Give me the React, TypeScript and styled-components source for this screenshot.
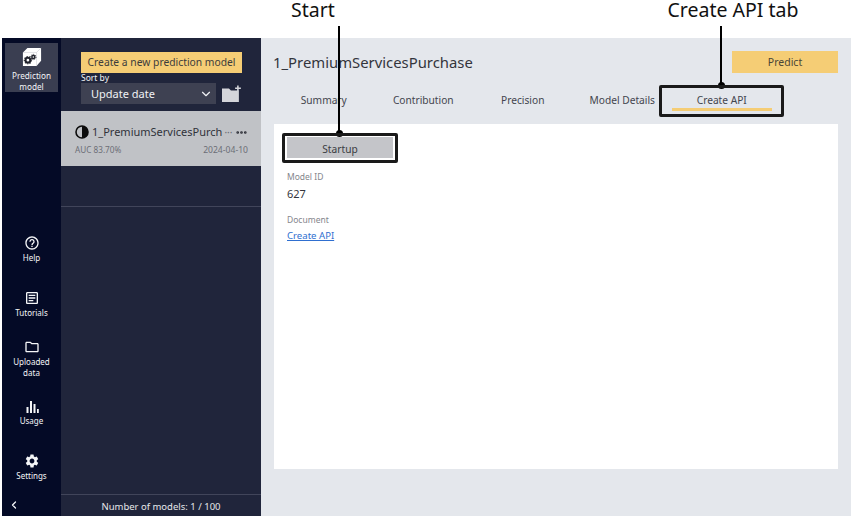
import React from 'react';
import styled, { createGlobalStyle } from 'styled-components';
import { ChevronDown, ChevronLeft, Ellipsis } from 'lucide-react';
import { MdHelpOutline, MdOutlineArticle, MdOutlineFolder, MdSettings } from 'react-icons/md';

const GlobalStyle = createGlobalStyle`
  html, body {
    margin: 0;
    padding: 0;
    background: #ffffff;
    font-family: "Noto Sans", "Open Sans", sans-serif;
  }
  * { box-sizing: border-box; }
`;

const Page = styled.div`
  position: relative;
  width: 853px;
  height: 518px;
  padding: 38px 2px 2px;
  background: #ffffff;
  overflow: hidden;
`;

const Frame = styled.div`
  display: flex;
  height: 478px;
`;

/* --- left nav --- */
const Nav = styled.nav`
  width: 59px;
  flex-shrink: 0;
  background: #040a26;
  display: flex;
  flex-direction: column;
  align-items: center;
  padding-top: 5px;
`;

const ActiveNavItem = styled.div`
  width: 53px;
  height: 49px;
  background: #3a3e51;
  display: flex;
  flex-direction: column;
  align-items: center;
  color: #f4f5f7;
  font-size: 8.2px;
  line-height: 11px;
  text-align: center;
  padding-top: 4px;
  gap: 3px;
`;

const NavGroup = styled.div`
  margin-top: auto;
  width: 100%;
  display: flex;
  flex-direction: column;
`;

const NavItem = styled.div`
  height: 54.5px;
  display: flex;
  flex-direction: column;
  align-items: center;
  justify-content: center;
  color: #f4f5f7;
  font-size: 8px;
  line-height: 11px;
  text-align: center;
  gap: 1px;

  span {
    max-width: 42px;
  }
`;

const Collapse = styled.div`
  height: 23px;
  margin-top: -1.5px;
  width: 100%;
  display: flex;
  align-items: center;
  padding-left: 6px;
  color: #f4f5f7;
`;

/* --- model list --- */
const ListPanel = styled.aside`
  width: 200px;
  flex-shrink: 0;
  background: #20253b;
  display: flex;
  flex-direction: column;
`;

const ListTools = styled.div`
  padding: 14px 19px 7px 20px;
`;

const NewModelButton = styled.div`
  width: 161px;
  height: 21px;
  background: #f5cd75;
  color: #3c3c3c;
  font-size: 10.3px;
  line-height: 21px;
  text-align: center;
  white-space: nowrap;
`;

const SortLabel = styled.div`
  color: #f0f1f4;
  font-size: 8.5px;
  line-height: 10px;
`;

const SortRow = styled.div`
  display: flex;
  align-items: center;
  gap: 6px;
`;

const SortSelect = styled.div`
  width: 136px;
  height: 21px;
  background: #3e4152;
  color: #f0f1f4;
  font-size: 11px;
  display: flex;
  align-items: center;
  justify-content: space-between;
  padding: 0 3px 0 10px;
`;

const ModelRow = styled.div`
  height: 55px;
  background: #c0c2c6;
  padding: 11px 13px 0 14px;
`;

const ModelName = styled.div`
  display: flex;
  align-items: center;
  color: #30323a;
  font-size: 11px;
  line-height: 20px;
  white-space: nowrap;
`;

const NameText = styled.span`
  margin-left: 3px;
`;

const MoreHint = styled.span`
  color: #6a6c74;
  font-size: 10px;
  margin-left: 2px;
  margin-right: auto;
`;

const ModelMeta = styled.div`
  display: flex;
  justify-content: space-between;
  color: #6c6e76;
  font-size: 8.2px;
  line-height: 12px;
  margin-top: 2px;
`;

const ModelDate = styled.span`
  font-size: 8.6px;
`;

const EmptySlot = styled.div`
  height: 41px;
  border-bottom: 1px solid #41455a;
`;

const ListFooter = styled.div`
  margin-top: auto;
  height: 22px;
  border-top: 1px solid #41455a;
  color: #e6e7ea;
  font-size: 9.5px;
  line-height: 23px;
  text-align: center;
`;

/* --- main area --- */
const Main = styled.main`
  flex: 1;
  background: #e4e7ec;
  padding: 13px 13px 47px 13px;
  display: flex;
  flex-direction: column;
`;

const Header = styled.div`
  display: flex;
  align-items: center;
  justify-content: space-between;
  height: 22px;
  margin-left: -1px;
`;

const Title = styled.h1`
  margin: 0;
  font-size: 14.85px;
  font-weight: 400;
  color: #33353c;
`;

const PredictButton = styled.div`
  width: 106px;
  height: 22px;
  background: #f5cd75;
  color: #4a4636;
  font-size: 10.5px;
  line-height: 22px;
  text-align: center;
`;

const Tabs = styled.div`
  display: flex;
  height: 37px;
  margin-top: 14px;
`;

const Tab = styled.div<{ $active?: boolean }>`
  width: 99.5px;
  height: 20px;
  margin-top: 4px;
  color: #43454e;
  font-size: 10.2px;
  line-height: 18px;
  text-align: center;
  white-space: nowrap;
  border-bottom: ${p => (p.$active ? '3px solid #f5cd75' : '3px solid transparent')};
`;

const Content = styled.section`
  flex: 1;
  background: #ffffff;
  padding: 13px;
`;

const StartupButton = styled.div`
  width: 106px;
  height: 21px;
  background: #c4c5c9;
  color: #3a3c42;
  font-size: 10.2px;
  line-height: 24px;
  text-align: center;
`;

const FieldLabel = styled.div<{ $gap: number }>`
  color: #85868c;
  font-size: 8.5px;
  line-height: 12px;
  margin-top: ${p => p.$gap}px;
`;

const FieldValue = styled.div`
  color: #33353c;
  font-size: 11px;
  line-height: 16px;
  margin-top: 3px;
`;

const DocLink = styled.a`
  display: block;
  color: #2f6fd0;
  font-size: 9.6px;
  line-height: 14px;
  margin-top: 3px;
  text-decoration: underline;
`;

/* --- annotations on top of the screenshot --- */
const CalloutLabel = styled.div<{ $x: number }>`
  position: absolute;
  top: -1px;
  left: ${p => p.$x}px;
  transform: translateX(-50%);
  color: #111111;
  font-size: 19.5px;
  line-height: 21px;
  white-space: nowrap;
`;

const CalloutLine = styled.div<{ $x: number; $h: number }>`
  position: absolute;
  top: 26px;
  left: ${p => p.$x}px;
  width: 2px;
  height: ${p => p.$h}px;
  background: #000000;

  &::after {
    content: '';
    position: absolute;
    left: -2.5px;
    bottom: -3.5px;
    width: 7px;
    height: 7px;
    border-radius: 50%;
    background: #000000;
  }
`;

const CalloutBox = styled.div<{ $x: number; $y: number; $w: number; $h: number }>`
  position: absolute;
  left: ${p => p.$x}px;
  top: ${p => p.$y}px;
  width: ${p => p.$w}px;
  height: ${p => p.$h}px;
  border: 3px solid #1a1a1a;
  border-radius: 2px;
`;

const PredictionIcon = () => (
  <svg width="20" height="20" viewBox="0 0 22 22">
    <path d="M1 6 L6 1 H21 V15 L16 21 H1 Z" fill="#ffffff" />
    <path d="M1 6 H16 V21 M16 6 L21 1" fill="none" stroke="#c9cad0" strokeWidth="0.6" />
    <circle cx="6.5" cy="14.5" r="2.6" fill="none" stroke="#20222c" strokeWidth="2.2" />
    <circle cx="6.5" cy="14.5" r="4" fill="none" stroke="#20222c" strokeWidth="1.2" strokeDasharray="1.4 1.4" />
    <circle cx="12.5" cy="11" r="1.7" fill="none" stroke="#20222c" strokeWidth="1.6" />
    <circle cx="12.5" cy="11" r="2.9" fill="none" stroke="#20222c" strokeWidth="1" strokeDasharray="1.1 1.1" />
  </svg>
);

const FolderPlusIcon = () => (
  <svg width="20" height="17" viewBox="0 0 20 17">
    <path d="M0 3.5 H7 L9 5.5 H17 V17 H0 Z" fill="#d4d5da" />
    <path d="M16 0.5 V6 M13.2 3.2 H19" stroke="#d4d5da" strokeWidth="1.6" />
  </svg>
);

const HalfCircleIcon = () => (
  <svg width="14" height="14" viewBox="0 0 14 14">
    <circle cx="7" cy="7" r="6" fill="none" stroke="#0c0c0c" strokeWidth="1.6" />
    <path d="M7 1 A6 6 0 0 1 7 13 Z" fill="#0c0c0c" />
  </svg>
);

const UsageIcon = () => (
  <svg width="14" height="14" viewBox="0 0 14 14" fill="#f4f5f7">
    <rect x="1.5" y="7" width="2" height="6" />
    <rect x="5" y="1" width="2" height="12" />
    <rect x="8.5" y="4" width="2" height="9" />
    <rect x="12" y="9" width="1.8" height="4" />
  </svg>
);

const App: React.FC = () => {
  return (
    <Page>
      <GlobalStyle />
      <Frame>
        <Nav>
          <ActiveNavItem>
            <PredictionIcon />
            <span>Prediction model</span>
          </ActiveNavItem>
          <NavGroup>
            <NavItem>
              <MdHelpOutline size={16} />
              Help
            </NavItem>
            <NavItem>
              <MdOutlineArticle size={16} />
              Tutorials
            </NavItem>
            <NavItem>
              <MdOutlineFolder size={16} />
              <span>Uploaded data</span>
            </NavItem>
            <NavItem>
              <UsageIcon />
              Usage
            </NavItem>
            <NavItem>
              <MdSettings size={16} />
              Settings
            </NavItem>
          </NavGroup>
          <Collapse>
            <ChevronLeft size={12} strokeWidth={2.6} />
          </Collapse>
        </Nav>

        <ListPanel>
          <ListTools>
            <NewModelButton>Create a new prediction model</NewModelButton>
            <SortLabel>Sort by</SortLabel>
            <SortRow>
              <SortSelect>
                Update date
                <ChevronDown size={14} strokeWidth={2} />
              </SortSelect>
              <FolderPlusIcon />
            </SortRow>
          </ListTools>
          <ModelRow>
            <ModelName>
              <HalfCircleIcon />
              <NameText>1_PremiumServicesPurch</NameText>
              <MoreHint>···</MoreHint>
              <Ellipsis size={13} strokeWidth={3} color="#2a2c34" />
            </ModelName>
            <ModelMeta>
              <span>AUC 83.70%</span>
              <ModelDate>2024-04-10</ModelDate>
            </ModelMeta>
          </ModelRow>
          <EmptySlot />
          <ListFooter>Number of models: 1 / 100</ListFooter>
        </ListPanel>

        <Main>
          <Header>
            <Title>1_PremiumServicesPurchase</Title>
            <PredictButton>Predict</PredictButton>
          </Header>
          <Tabs>
            <Tab>Summary</Tab>
            <Tab>Contribution</Tab>
            <Tab>Precision</Tab>
            <Tab>Model Details</Tab>
            <Tab $active>Create API</Tab>
          </Tabs>
          <Content>
            <StartupButton>Startup</StartupButton>
            <FieldLabel $gap={13}>Model ID</FieldLabel>
            <FieldValue>627</FieldValue>
            <FieldLabel $gap={12}>Document</FieldLabel>
            <DocLink href="#">Create API</DocLink>
          </Content>
        </Main>
      </Frame>

      <CalloutLabel $x={313}>Start</CalloutLabel>
      <CalloutLine $x={338} $h={107} />
      <CalloutBox $x={282} $y={133} $w={116} $h={30} />

      <CalloutLabel $x={733}>Create API tab</CalloutLabel>
      <CalloutLine $x={720} $h={59} />
      <CalloutBox $x={659} $y={85} $w={125} $h={32} />
    </Page>
  );
};

export default App;
